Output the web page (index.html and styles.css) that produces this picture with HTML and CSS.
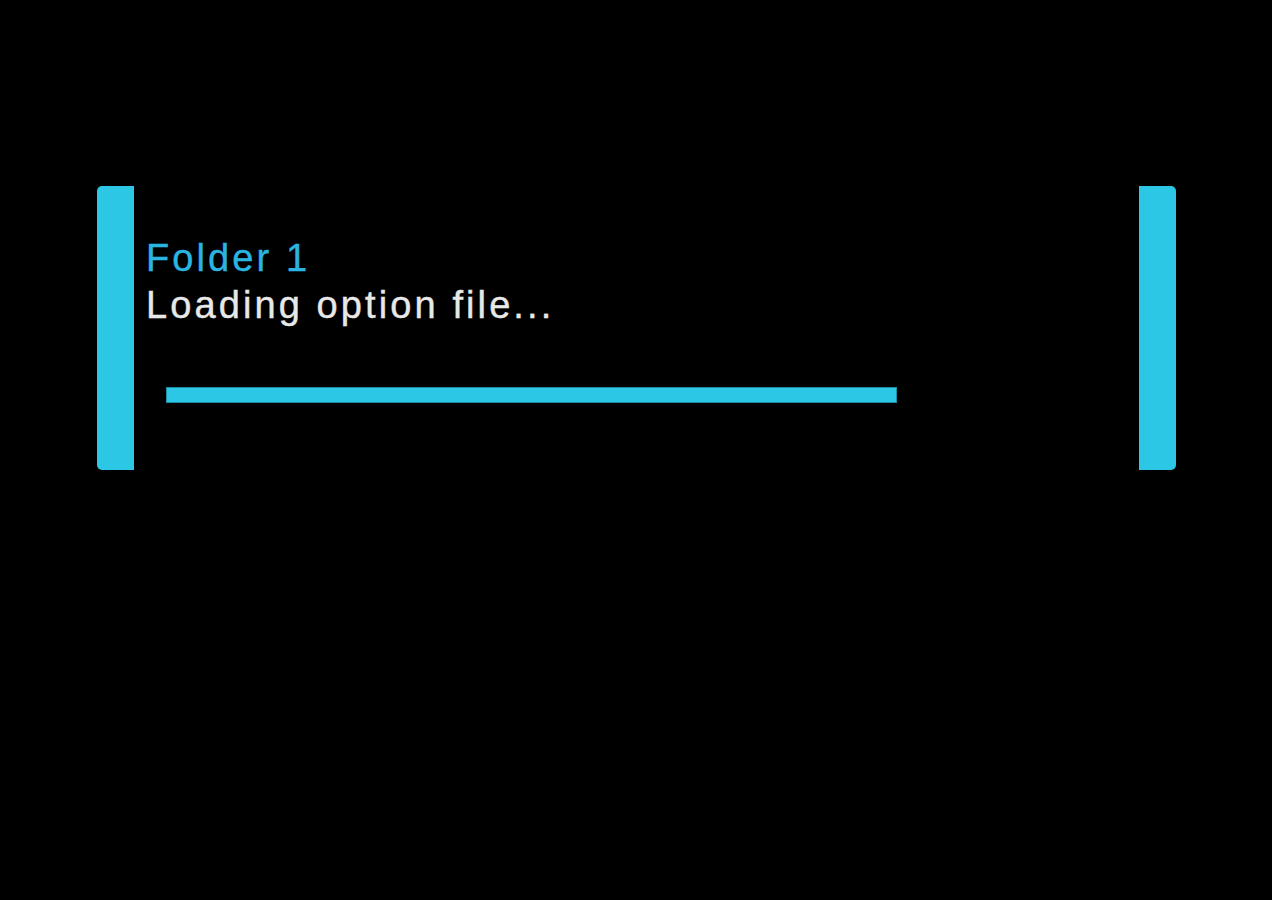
FILE: index.html
```html
<!DOCTYPE html>
<html>
<head>
<meta charset="utf-8">
<link rel="stylesheet" href="styles.css">
</head>
<body>
<div class="screen">
  <div class="bar bar-left"></div>
  <div class="content">
    <div class="title">Folder 1</div>
    <div class="status">Loading option file...</div>
    <div class="progress"></div>
  </div>
  <div class="bar bar-right"></div>
</div>
</body>
</html>
```
FILE: styles.css
```css
html, body {
  margin: 0;
  padding: 0;
  background: #000;
  width: 1272px;
  height: 900px;
  overflow: hidden;
}
.screen {
  display: flex;
  align-items: flex-start;
  padding: 186px 96px 0 97px;
}
.bar {
  width: 37px;
  height: 284px;
  background: #2bc7e5;
  flex: none;
}
.bar-left {
  border-radius: 5px 0 0 5px;
}
.bar-right {
  border-radius: 0 5px 5px 0;
}
.content {
  flex: 1;
  padding: 49px 0 0 12px;
  font-family: "Liberation Sans", Arial, sans-serif;
  font-size: 38px;
  line-height: 47px;
  letter-spacing: 3.1px;
  -webkit-text-stroke: 0.4px currentColor;
}
.title {
  color: #2ab5e1;
}
.status {
  color: #e8e8e8;
}
.progress {
  margin: 58px 0 0 20px;
  width: 729px;
  height: 14px;
  background: #2bc7e5;
  border: 1px solid #1b8ea6;
}
```
